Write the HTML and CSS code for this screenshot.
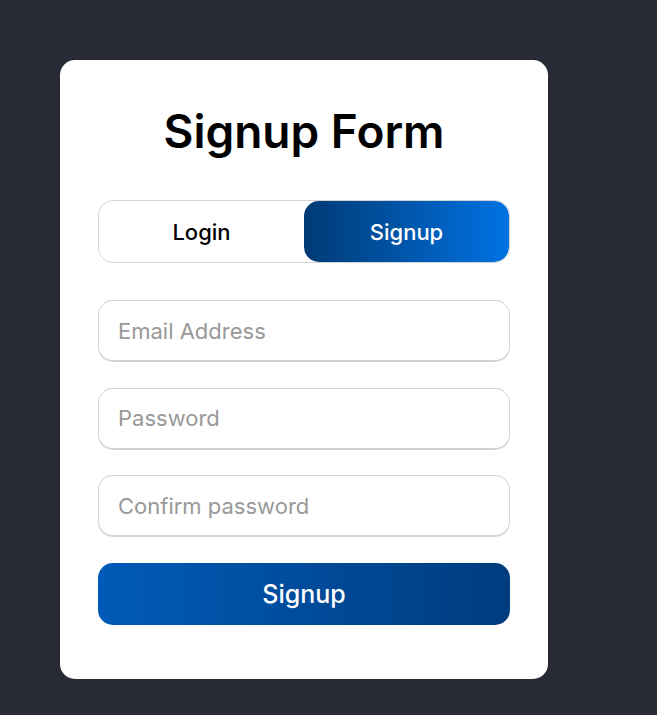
FILE: index.html
```html
<!DOCTYPE html>
<html lang="en">
<head>
  <meta charset="UTF-8">
  <meta name="viewport" content="width=device-width, initial-scale=1.0">
  <title>Signup Form</title>
  <link rel="stylesheet" href="styles.css">
</head>
<body>
  <div class="wrapper">
    <h1 class="title">Signup Form</h1>

    <!-- Login / Signup switch -->
    <div class="slide-controls">
      <button type="button" class="slide login">Login</button>
      <button type="button" class="slide signup active">Signup</button>
    </div>

    <form action="#" class="signup-form">
      <input type="email" class="field" placeholder="Email Address" required>
      <input type="password" class="field" placeholder="Password" required>
      <input type="password" class="field" placeholder="Confirm password" required>
      <button type="submit" class="submit-btn">Signup</button>
    </form>
  </div>
</body>
</html>
```

FILE: styles.css
```css
* {
  margin: 0;
  padding: 0;
  box-sizing: border-box;
}

body {
  font-family: 'Inter', 'Open Sans', sans-serif;
  background: #282a36;
  min-height: 100vh;
  padding: 60px 0 0 60px;
}

.wrapper {
  width: 488px;
  background: #fff;
  border-radius: 15px;
  padding: 40px 38px 54px;
}

.title {
  font-size: 46px;
  font-weight: 600;
  text-align: center;
  color: #000;
  line-height: 62px;
  margin-bottom: 38px;
}

/* Switch */
.slide-controls {
  display: flex;
  height: 63px;
  border: 1px solid #d3d3d3;
  border-radius: 15px;
  overflow: hidden;
  margin-bottom: 37px;
}

.slide {
  flex: 1;
  border: none;
  background: none;
  font-family: inherit;
  font-size: 22px;
  font-weight: 500;
  color: #000;
  border-radius: 15px;
  cursor: pointer;
}

.slide.active {
  color: #fff;
  background: linear-gradient(to right, #003a74, #0072e3);
}

/* Form */
.signup-form {
  display: flex;
  flex-direction: column;
  gap: 25.5px;
}

.field {
  height: 62px;
  width: 100%;
  border: 1px solid #d3d3d3;
  border-bottom-width: 2px;
  border-radius: 15px;
  padding: 0 19px;
  font-family: inherit;
  font-size: 22px;
  color: #333;
  outline: none;
}

.field::placeholder {
  color: #999;
}

.submit-btn {
  height: 62px;
  border: none;
  border-radius: 15px;
  background: linear-gradient(to right, #005bb8, #003c7e);
  color: #fff;
  font-family: inherit;
  font-size: 25px;
  font-weight: 500;
  cursor: pointer;
}
```
